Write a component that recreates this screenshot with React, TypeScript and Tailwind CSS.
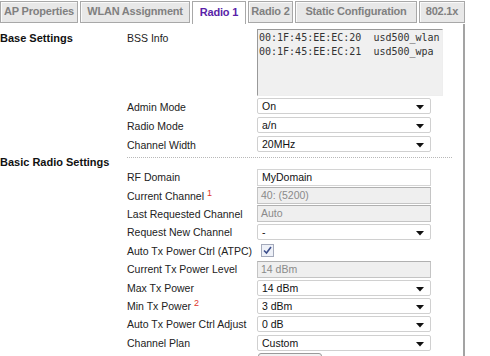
import React from 'react';

const tabs = [
  { name: 'AP Properties', w: 'w-[78px]' },
  { name: 'WLAN Assignment', w: 'w-[110px]' },
  { name: 'Radio 1', w: 'w-[54px]', active: true },
  { name: 'Radio 2', w: 'w-[45px]' },
  { name: 'Static Configuration', w: 'w-[122px]' },
  { name: '802.1x', w: 'w-[46px]' },
];

function Arrow() {
  return (
    <svg className="absolute right-[6px] top-[6px]" width="8" height="5" viewBox="0 0 8 5">
      <path d="M0 0H8L4 4.5Z" fill="#111" />
    </svg>
  );
}

function Select({ value }: { value: string }) {
  return (
    <div className="relative h-[16px] w-[174px] rounded-[2px] border border-[#d0d0d0] bg-white pl-[4px] text-[10.5px] leading-[14px] text-[#111]">
      {value}
      <Arrow />
    </div>
  );
}

function TextBox({ value, disabled }: { value: string; disabled?: boolean }) {
  return (
    <div
      className={
        disabled
          ? 'h-[17px] w-[174px] border border-[#c4c4c4] border-t-[#b0b0b0] bg-[#efefef] pl-[3px] text-[10.5px] leading-[15px] text-[#8a8a8a]'
          : 'h-[17px] w-[174px] border border-[#d4d4d4] bg-white pl-[4px] text-[10.5px] leading-[15px] text-[#111]'
      }
    >
      {value}
    </div>
  );
}

function Checkbox() {
  return (
    <div className="ml-[4px] flex h-[13px] w-[13px] items-center justify-center border border-[#a4aabb] bg-[#eef1f8]">
      <svg width="9" height="9" viewBox="0 0 9 9">
        <path d="M1 4.5L3.5 7L8 1" fill="none" stroke="#3d4f8c" strokeWidth="1.6" />
      </svg>
    </div>
  );
}

function Sup({ n }: { n: string }) {
  return <span className="relative -top-[4px] ml-[3px] text-[9px] leading-none text-[#e0352b]">{n}</span>;
}

type Row = { label: React.ReactNode; control: React.ReactNode };

const radioRows: Row[] = [
  { label: 'RF Domain', control: <TextBox value="MyDomain" /> },
  { label: <>Current Channel<Sup n="1" /></>, control: <TextBox value="40: (5200)" disabled /> },
  { label: 'Last Requested Channel', control: <TextBox value="Auto" disabled /> },
  { label: 'Request New Channel', control: <Select value="-" /> },
  { label: 'Auto Tx Power Ctrl (ATPC)', control: <Checkbox /> },
  { label: 'Current Tx Power Level', control: <TextBox value="14 dBm" disabled /> },
  { label: 'Max Tx Power', control: <Select value="14 dBm" /> },
  { label: <>Min Tx Power<Sup n="2" /></>, control: <Select value="3 dBm" /> },
  { label: 'Auto Tx Power Ctrl Adjust', control: <Select value="0 dB" /> },
  { label: 'Channel Plan', control: <Select value="Custom" /> },
];

export default function App() {
  return (
    <div className="h-[356px] w-[490px] overflow-hidden bg-white font-['Liberation_Sans',Arial,sans-serif] text-[#222]">
      {/* Tabs */}
      <div className="flex h-[24px] items-start gap-[2px] pt-[1px]">
        {tabs.map((t) =>
          t.active ? (
            <div
              key={t.name}
              className={`${t.w} flex h-[23px] items-center justify-center border border-b-0 border-[#a8a8a8] bg-white pb-[2px] text-[11px] font-bold tracking-[-0.2px] text-[#5a1fa8]`}
            >
              {t.name}
            </div>
          ) : (
            <div
              key={t.name}
              className={`${t.w} flex h-[22px] items-center justify-center border border-[#a8a8a8] bg-[#e8e8e8] pb-[1px] text-[11px] font-bold tracking-[-0.2px] text-[#808080] shadow-[inset_1px_1px_0_#fafafa]`}
            >
              {t.name}
            </div>
          )
        )}
      </div>

      {/* Panel */}
      <div className="h-[340px] w-[465px] border-r-2 border-[#a3a3a3] pt-[5px]">
        {/* Base settings */}
        <div className="flex">
          <div className="w-[127px] pt-[2px] text-[11px] font-bold leading-[14px] text-[#111]">Base Settings</div>
          <div className="w-[130px] pt-[2px] text-[10.5px] leading-[14px]">BSS Info</div>
          <div className="h-[67px] w-[186px] border border-[#999] border-b-[#eee] border-r-[#eee] bg-[#f0f0f0] pl-[1px] pt-[1px] font-['DejaVu_Sans_Mono',monospace] text-[10px] leading-[14px] text-[#333]">
            <div>00:1F:45:EE:EC:20&nbsp;&nbsp;usd500_wlan</div>
            <div>00:1F:45:EE:EC:21&nbsp;&nbsp;usd500_wpa</div>
          </div>
        </div>
        <div className="mt-[2px] flex flex-col gap-[3px]">
          {[
            ['Admin Mode', 'On'],
            ['Radio Mode', 'a/n'],
            ['Channel Width', '20MHz'],
          ].map(([l, v]) => (
            <div key={l} className="flex items-center pl-[127px]">
              <div className="w-[130px] whitespace-nowrap pt-[1px] text-[10.5px] leading-[14px]">{l}</div>
              <Select value={v} />
            </div>
          ))}
        </div>

        {/* Basic radio settings */}
        <div className="mt-[5px] flex h-[1px] items-start">
          <div className="-mt-[2px] h-[14px] w-[127px] shrink-0 whitespace-nowrap text-[11px] font-bold leading-[14px] text-[#111]">
            Basic Radio Settings
          </div>
          <div className="w-[325px] border-t border-dotted border-[#b8b8b8]" />
        </div>
        <div className="mt-[10px] flex flex-col">
          {radioRows.map((r, i) => (
            <div key={i} className="flex h-[18.4px] items-center pl-[127px]">
              <div className="w-[130px] whitespace-nowrap text-[10.5px] leading-[14px]">{r.label}</div>
              {r.control}
            </div>
          ))}
        </div>
        <div className="mt-[1px] pl-[258px]">
          <button className="h-[22px] w-[64px] rounded-[3px] border border-[#9a9a9a] bg-[#f2f2f2]" />
        </div>
      </div>
    </div>
  );
}
